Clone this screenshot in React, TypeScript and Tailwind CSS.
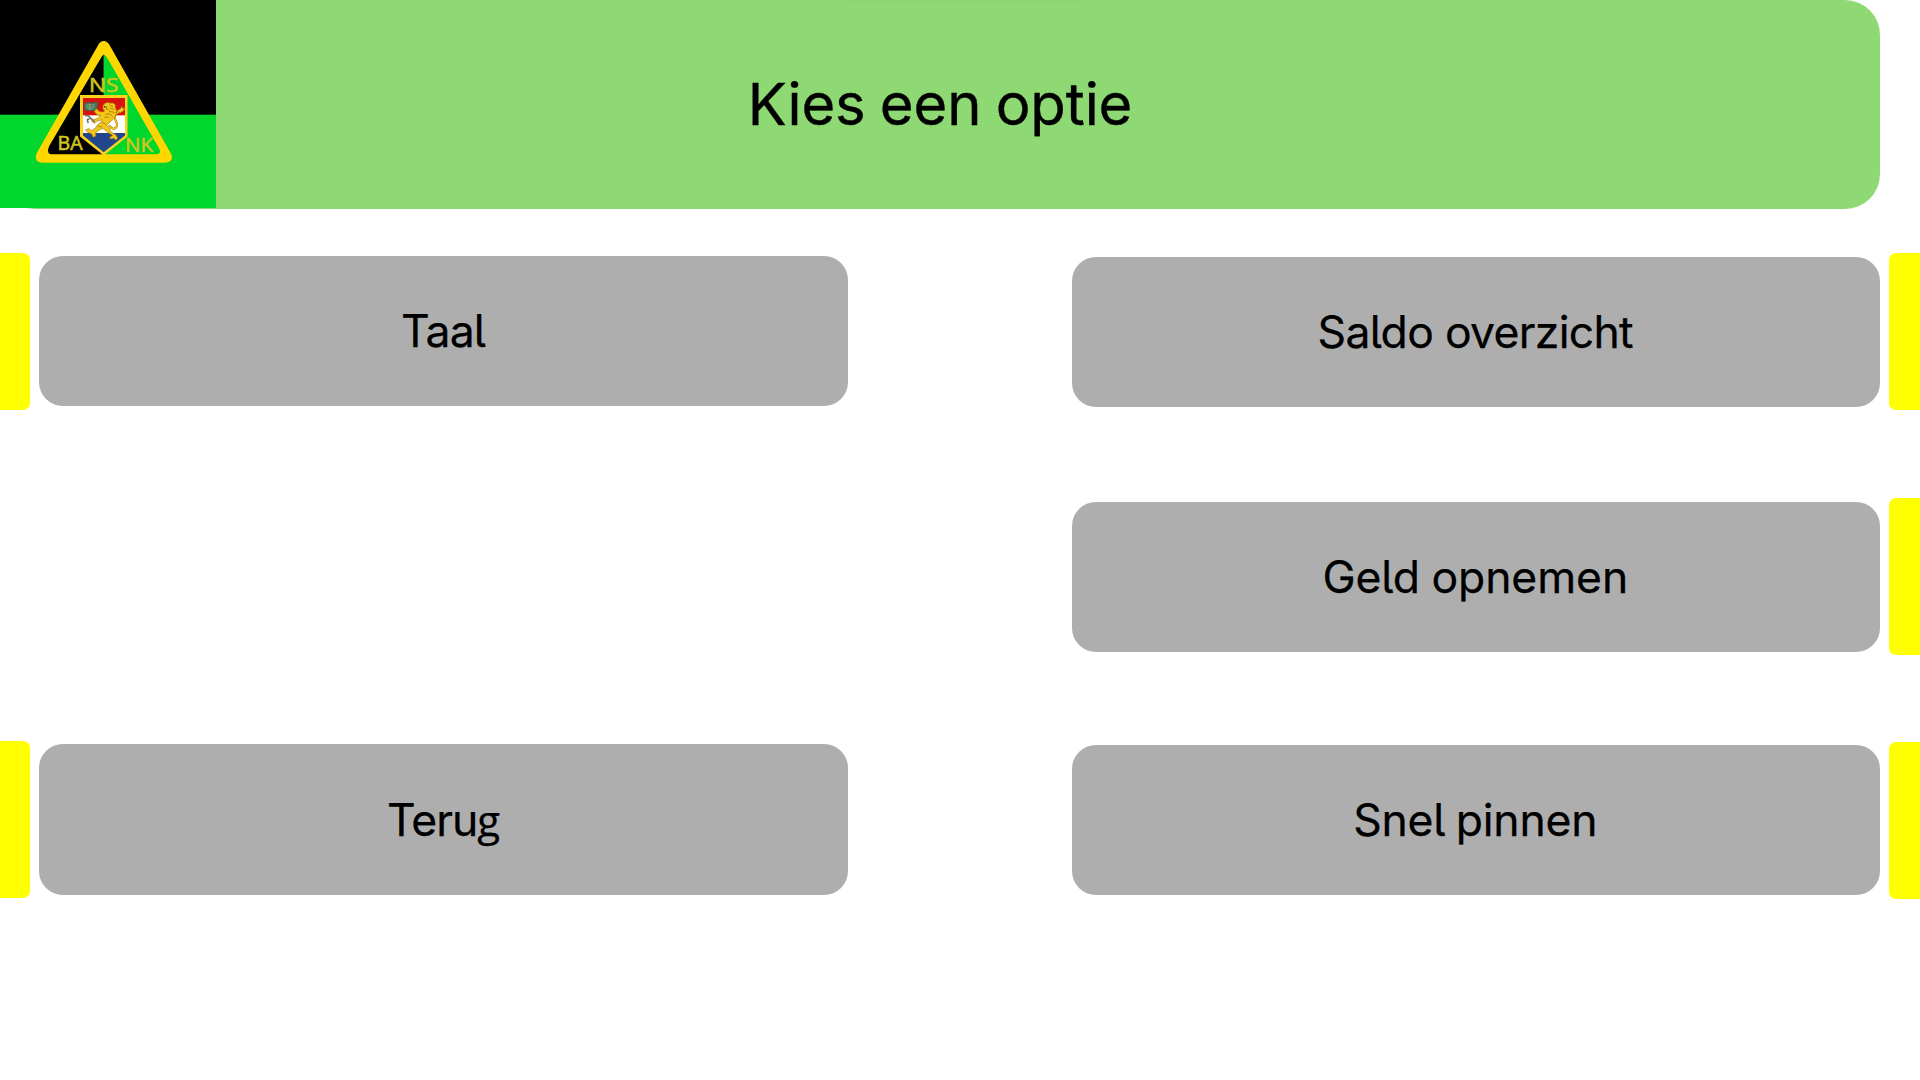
import React from "react";

function Logo() {
  return (
    <svg viewBox="0 0 216 208" className="block h-[208px] w-[216px] shrink-0" aria-label="NS Bank">
      <rect width="216" height="208" fill="#00d62b" />
      <rect width="216" height="114.7" fill="#000" />
      <path
        d="M97.900 45.500Q100 41 103.700 41Q107.400 41 109.800 45.500L170.600 153C174 159 170.500 162.800 165 162.800H42.500C37 162.800 34.200 159 36.800 153Z"
        fill="#ffd700"
      />
      <path d="M103.8 54.300Q102 55.500 100 59.500L49.500 145.500C46.800 151 48 154.300 52 154.300H103.800Z" fill="#000" />
      <path d="M103.8 54.300Q106 55.500 108.200 59.500L158.300 147C161.500 152 160 154.300 156 154.300H103.800Z" fill="#00d62b" />
      <g fill="#d2c51c" stroke="#d2c51c" strokeWidth="0.6" fontFamily="'Open Sans', sans-serif" fontSize="20">
        <text x="89" y="92.300" textLength="29.500" lengthAdjust="spacingAndGlyphs">NS</text>
        <text x="57.500" y="150.300" textLength="25" lengthAdjust="spacingAndGlyphs">BA</text>
        <text x="125" y="152.300" textLength="28" lengthAdjust="spacingAndGlyphs">NK</text>
      </g>
      <path d="M80 95H127.500V136.500L103.700 155.500L80 136.500Z" fill="#ffd21c" />
      <path d="M83 98H125V115.500H83Z" fill="#d9120f" />
      <path d="M83 115.500H125V133H83Z" fill="#fff" />
      <path d="M83 133H125V135.500L103.700 152.300L83 135.500Z" fill="#21468b" />
      <g transform="translate(70 80) scale(.33333)" strokeLinejoin="round" strokeLinecap="round">
        <path d="M119 137C125 150 139 148 141 137C143 126 130 117 135 106C138 98 149 98 156 91" fill="none" stroke="#8b6505" strokeWidth="6" />
        <path d="M119 137C125 150 139 148 141 137C143 126 130 117 135 106C138 98 149 98 156 91" fill="none" stroke="#f3c719" strokeWidth="4" />
        <path d="M132 95L143 91L151 86L156 78L158 86L165 83L161 92L151 98L143 95L135 101Z" fill="#f3c719" stroke="#a36f09" strokeWidth="1.500" />
        <path d="M99 78C103 67 114 66 122 70C133 65 139 77 136 84C143 92 136 98 137 106C132 116 128 120 117 128L111 136L119 145L122 155L137 164L143 174L138 181L132 175L120 177L119 171L128 167L112 156L99 145L87 150L77 158L77 169L69 172L65 162L52 156L47 149L57 146L65 152L77 143L84 133L94 126L97 119L83 123L74 130L65 124L70 119L83 115L92 106L82 105L73 95L73 86L82 85L85 93L97 96L104 93L99 87Z" fill="#f3c719" stroke="#9c6b08" strokeWidth="1.700" />
        <path d="M102 83L111 79L108 86L116 89M119 75L128 80M121 84L132 88M118 94L132 97M107 103L119 101L127 109M104 112L117 111M96 128L107 132M85 139L95 141M116 160L125 164" fill="none" stroke="#8b6307" strokeWidth="2" />
        <path d="M43 72L48 68L73 69L78 64L83 70L80 87L72 91L50 92L43 88Z" fill="#46795c" stroke="#315a42" strokeWidth="2" />
        <path d="M49 75L73 74M50 82L74 80M54 87L70 87M59 71V90" fill="none" stroke="#9bb184" strokeWidth="2" />
        <path d="M47 107L56 108L64 117L72 124M54 127L52 119L60 115" fill="none" stroke="#6f7473" strokeWidth="5" />
        <path d="M50 109L62 119" fill="none" stroke="#d5d5c9" strokeWidth="2" />
        <circle cx="104" cy="80" r="2" fill="#362400" />
      </g>
    </svg>
  );
}

function Option({ children, tracking }: { children: React.ReactNode; tracking: string }) {
  return (
    <button className="flex h-[150.500px] w-[808.500px] items-center justify-center rounded-[24px] bg-[#aeaeae] pt-px pr-px text-[44.500px] leading-none text-black [-webkit-text-stroke:0.25px_black]">
      <span className={tracking}>{children}</span>
    </button>
  );
}

function Marker({ side }: { side: "left" | "right" }) {
  return (
    <div
      className={
        side === "left"
          ? "h-[157px] w-[30px] rounded-r-[7px] bg-[#ffff00]"
          : "h-[157px] w-[31px] rounded-l-[7px] bg-[#ffff00]"
      }
    />
  );
}

export default function App() {
  return (
    <main className="h-[1080px] w-[1920px] overflow-hidden bg-white font-['Inter',sans-serif] text-black [font-feature-settings:'cv05']">
      <header className="relative flex h-[209px] w-[1880px] rounded-r-[35px] rounded-bl-[35px] bg-[#8ed973]">
        <Logo />
        <h1 className="mr-[216px] flex flex-1 items-center justify-center pb-[2px] text-[58px] leading-none [-webkit-text-stroke:0.4px_black]">
          <span className="tracking-[-0.100px] whitespace-nowrap [word-spacing:-2px]">Kies een optie</span>
        </h1>
        <div className="absolute top-0 left-[845px] h-[3px] w-[235px] bg-linear-to-b from-[#8ad470] to-[#8ed973] blur-[1px]" />
      </header>
      <div className="flex justify-between">
        <section className="flex flex-col gap-[331.500px] pt-[43.500px]">
          <div className="flex items-center gap-[9.300px]">
            <Marker side="left" />
            <Option tracking="tracking-[-0.900px]">Taal</Option>
          </div>
          <div className="flex items-center gap-[9.300px]">
            <Marker side="left" />
            <Option tracking="tracking-[-1px]">
              Teru<span className="font-['Open_Sans',sans-serif] text-[42px] leading-none">g</span>
            </Option>
          </div>
        </section>
        <section className="flex flex-col pt-[44.300px]">
          <div className="flex items-center gap-[9px]">
            <Option tracking="tracking-[-0.700px]">Saldo overzicht</Option>
            <Marker side="right" />
          </div>
          <div className="mt-[88px] flex items-center gap-[9px]">
            <Option tracking="tracking-[-0.100px] [word-spacing:-1px]">Geld opnemen</Option>
            <Marker side="right" />
          </div>
          <div className="mt-[86.300px] flex items-center gap-[9px]">
            <Option tracking="tracking-[-0.200px] [word-spacing:-2px]">Snel pinnen</Option>
            <Marker side="right" />
          </div>
        </section>
      </div>
    </main>
  );
}
